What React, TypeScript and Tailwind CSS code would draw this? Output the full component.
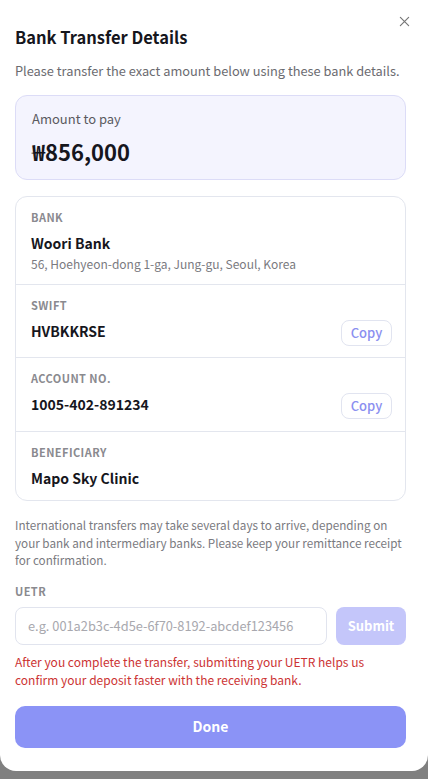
import React from "react";

function Row({ label, value, sub, copy, h }: { label: string; value: string; sub?: string; copy?: boolean; h: string }) {
  return (
    <div className={`flex items-start justify-between pl-[15px] pr-[13px] pt-[13px] ${h}`}>
      <div className="flex flex-col">
        <div className="text-[11px] leading-[14px] font-bold tracking-[0.04em] text-[#8a8a8f]">{label}</div>
        <div className="mt-[9px] text-[14px] leading-[20px] font-semibold text-[#16161d]">{value}</div>
        {sub && <div className="mt-[3px] text-[12px] leading-[16px] text-[#7a7a80]">{sub}</div>}
      </div>
      {copy && (
        <button className="mt-[22px] h-[26px] w-[51px] rounded-[8px] border border-[#e1e4f0] bg-white text-[13px] font-medium text-[#8b8ff0]">
          Copy
        </button>
      )}
    </div>
  );
}

export default function App() {
  return (
    <div
      className="h-[779px] w-full bg-[#808080] overflow-hidden"
      style={{ fontFamily: '"Noto Sans CJK KR", "Noto Sans", sans-serif' }}
    >
      <div className="relative h-[771px] w-full rounded-b-[16px] bg-white pl-[15px] pr-[22px] pt-[25px]">
        <button className="absolute right-[18px] top-[16px] text-[#777]">
          <svg width="11" height="11" viewBox="0 0 12 12" fill="none" stroke="currentColor" strokeWidth="1.3" strokeLinecap="round">
            <path d="M1.5 1.5 L10.5 10.5 M10.5 1.5 L1.5 10.5" />
          </svg>
        </button>
        <h1 className="text-[16.5px] leading-[24px] font-bold text-[#16161d]">Bank Transfer Details</h1>
        <p className="mt-[13px] text-[12.8px] leading-[18px] text-[#6b6b70]">
          Please transfer the exact amount below using these bank details.
        </p>

        <div className="mt-[15px] h-[85px] rounded-[12px] border border-[#dcdcf7] bg-[#f4f4fe] px-[16px] pt-[14px]">
          <div className="text-[13px] leading-[18px] text-[#5a5a60]">Amount to pay</div>
          <div className="mt-[9px] text-[22px] leading-[28px] font-bold text-[#16161d]">₩856,000</div>
        </div>

        <div className="mt-[16px] rounded-[12px] border border-[#e3e6ee] divide-y divide-[#e3e6ee]">
          <Row h="h-[88px]" label="BANK" value="Woori Bank" sub="56, Hoehyeon-dong 1-ga, Jung-gu, Seoul, Korea" />
          <Row h="h-[73px]" label="SWIFT" value="HVBKKRSE" copy />
          <Row h="h-[74px]" label="ACCOUNT NO." value="1005-402-891234" copy />
          <Row h="h-[68px]" label="BENEFICIARY" value="Mapo Sky Clinic" />
        </div>

        <p className="mt-[15px] text-[11.7px] leading-[17.5px] text-[#7a7a80]">
          International transfers may take several days to arrive, depending on your bank and intermediary banks. Please keep your remittance receipt for confirmation.
        </p>

        <div className="mt-[15px] text-[11px] leading-[14px] font-bold tracking-[0.04em] text-[#8a8a8f]">UETR</div>
        <div className="mt-[9px] flex gap-[9px]">
          <input
            className="h-[38px] min-w-0 flex-1 rounded-[8px] border border-[#e1e4ee] px-[12px] text-[12.8px] text-[#333] placeholder:text-[#a8a8ae] outline-none"
            placeholder="e.g. 001a2b3c-4d5e-6f70-8192-abcdef123456"
          />
          <button className="h-[38px] w-[70px] rounded-[8px] bg-[#c4c6fa] text-[13px] font-bold text-white">Submit</button>
        </div>
        <p className="mt-[8px] text-[12px] leading-[18px] text-[#cc3333]">
          After you complete the transfer, submitting your UETR helps us confirm your deposit faster with the receiving bank.
        </p>

        <button className="mt-[17px] h-[42px] w-full rounded-[10px] bg-[#8b93f6] text-[14px] font-bold text-white">Done</button>
      </div>
    </div>
  );
}
